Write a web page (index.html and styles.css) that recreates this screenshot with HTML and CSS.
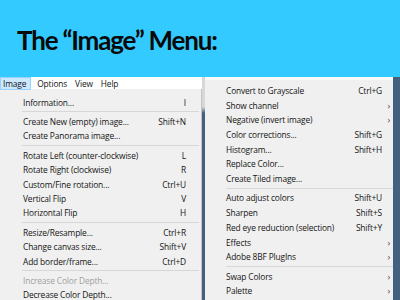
FILE: index.html
```html
<!DOCTYPE html>
<html lang="en">
  <head>
    <meta charset="UTF-8" />
    <title>The Image Menu</title>
    <link rel="stylesheet" href="styles.css">
  </head>
  <body>
    <header class="slide-head">
      <h1>The “Image” Menu:</h1>
    </header>
    <main class="shot">
      <section class="left-pane">
        <nav class="menubar">
          <span class="menubar-item active">Image</span>
          <span class="menubar-item">Options</span>
          <span class="menubar-item">View</span>
          <span class="menubar-item">Help</span>
        </nav>
        <ul class="menu menu-left">
          <li class="row"><span>Information...</span><span class="key">I</span></li>
          <li class="sep"></li>
          <li class="row"><span>Create New (empty) image...</span><span class="key">Shift+N</span></li>
          <li class="row"><span>Create Panorama image...</span><span class="key"></span></li>
          <li class="sep"></li>
          <li class="row"><span>Rotate Left (counter-clockwise)</span><span class="key">L</span></li>
          <li class="row"><span>Rotate Right (clockwise)</span><span class="key">R</span></li>
          <li class="row"><span>Custom/Fine rotation...</span><span class="key">Ctrl+U</span></li>
          <li class="row"><span>Vertical Flip</span><span class="key">V</span></li>
          <li class="row"><span>Horizontal Flip</span><span class="key">H</span></li>
          <li class="sep"></li>
          <li class="row"><span>Resize/Resample...</span><span class="key">Ctrl+R</span></li>
          <li class="row"><span>Change canvas size...</span><span class="key">Shift+V</span></li>
          <li class="row"><span>Add border/frame...</span><span class="key">Ctrl+D</span></li>
          <li class="sep"></li>
          <li class="row disabled"><span>Increase Color Depth...</span><span class="key"></span></li>
          <li class="row"><span>Decrease Color Depth...</span><span class="key"></span></li>
        </ul>
      </section>
      <div class="divider"></div>
      <section class="right-pane">
        <ul class="menu menu-right">
          <li class="row"><span>Convert to Grayscale</span><span class="key">Ctrl+G</span><span class="arrow"></span></li>
          <li class="row"><span>Show channel</span><span class="key"></span><span class="arrow">›</span></li>
          <li class="row"><span>Negative (invert image)</span><span class="key"></span><span class="arrow">›</span></li>
          <li class="row"><span>Color corrections...</span><span class="key">Shift+G</span><span class="arrow"></span></li>
          <li class="row"><span>Histogram...</span><span class="key">Shift+H</span><span class="arrow"></span></li>
          <li class="row"><span>Replace Color...</span><span class="key"></span><span class="arrow"></span></li>
          <li class="row"><span>Create Tiled image...</span><span class="key"></span><span class="arrow"></span></li>
          <li class="sep"></li>
          <li class="row"><span>Auto adjust colors</span><span class="key">Shift+U</span><span class="arrow"></span></li>
          <li class="row"><span>Sharpen</span><span class="key">Shift+S</span><span class="arrow"></span></li>
          <li class="row"><span>Red eye reduction (selection)</span><span class="key">Shift+Y</span><span class="arrow"></span></li>
          <li class="row"><span>Effects</span><span class="key"></span><span class="arrow">›</span></li>
          <li class="row"><span>Adobe 8BF PlugIns</span><span class="key"></span><span class="arrow">›</span></li>
          <li class="sep"></li>
          <li class="row"><span>Swap Colors</span><span class="key"></span><span class="arrow">›</span></li>
          <li class="row"><span>Palette</span><span class="key"></span><span class="arrow">›</span></li>
        </ul>
      </section>
      <div class="edge"></div>
    </main>
  </body>
</html>
```

FILE: styles.css
```css
* {
  box-sizing: border-box;
}

html,
body {
  height: 100%;
  margin: 0;
  overflow: hidden;
}

body {
  background-color: #f0f0f0;
  display: flex;
  flex-direction: column;
  font-family: "Open Sans", sans-serif;
}

.slide-head {
  background-color: #33caff;
  flex: none;
  height: 77px;
  padding: 25px 0 0 17px;
}

.slide-head h1 {
  color: #0a0a0a;
  font-family: Lato, sans-serif;
  font-size: 26px;
  font-weight: 700;
  letter-spacing: -1.2px;
  line-height: 30px;
  margin: 0;
}

.shot {
  color: #141414;
  display: flex;
  flex: 1;
  font-size: 8.4px;
  letter-spacing: -0.15px;
}

.left-pane {
  display: flex;
  flex-direction: column;
  width: 202px;
}

.menubar {
  align-items: center;
  background-color: #fff;
  display: flex;
  height: 12px;
}

.menubar-item {
  line-height: 11px;
  padding: 0 4px;
}

.menubar-item.active {
  background-color: #cce8ff;
  border: 1px solid #99d1ff;
  padding: 0 4px 0 2px;
  margin-right: 2px;
}

.menu {
  list-style: none;
  margin: 0;
}

.menu-left {
  border-right: 1px solid #c4c4c4;
  flex: 1;
  padding: 6px 0 0 0;
}

.row {
  align-items: center;
  display: flex;
  white-space: nowrap;
}

.menu-left .row {
  height: 14.4px;
  padding: 0 15px 0 23px;
}

.row span:first-child {
  flex: 1;
}

.key {
  text-align: right;
}

.disabled {
  color: #a0a0a0;
}

.sep {
  background: linear-gradient(transparent 2px, #d7d7d7 2px, #d7d7d7 3px, transparent 3px);
  height: 5px;
}

.menu-left .sep {
  margin-left: 22px;
  margin-right: 2px;
}

.divider {
  background: linear-gradient(#d8d8d8 0, #d8d8d8 30px, #43607f 36px);
  width: 3px;
}

.right-pane {
  border-top: 3px solid #fafafa;
  flex: 1;
}

.menu-right {
  padding: 3px 0 0 21px;
}

.menu-right .row {
  height: 14.7px;
  padding-right: 3px;
}

.menu-right .sep {
  height: 4.8px;
}

.arrow {
  color: #444;
  font-size: 9px;
  text-align: right;
  width: 8px;
}

.edge {
  background-color: #43607f;
  width: 7px;
}
```
